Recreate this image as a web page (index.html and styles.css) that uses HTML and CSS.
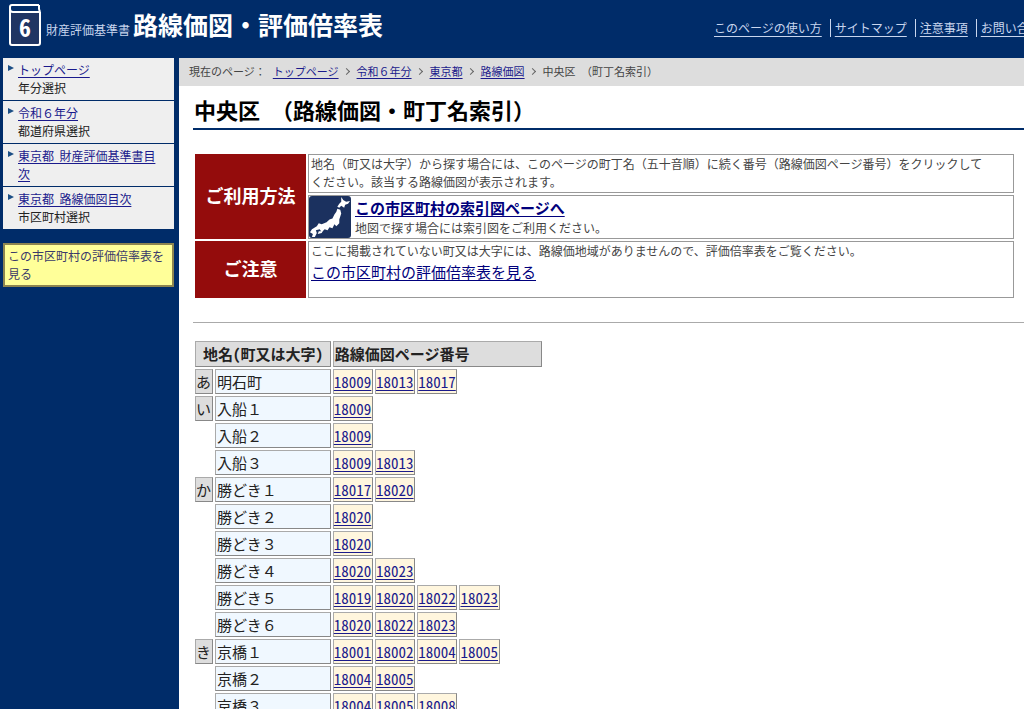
FILE: index.html
```html
<!DOCTYPE html>
<html lang="ja">
<head>
<meta charset="utf-8">
<title>中央区（路線価図・町丁名索引）</title>
<link rel="stylesheet" href="styles.css">
</head>
<body>
<header class="header">
  <div class="brand">
    <svg class="book" viewBox="0 0 34 44" width="34" height="44" role="img" aria-label="令和6年分">
      <rect x="2" y="10" width="30" height="32" fill="#203563"/>
      <path d="M31 2H4Q2 2 2 4V40Q2 42 4 42H30Q32 42 32 40V9H5Q2 9 2 6M31 2V6L32 9" fill="none" stroke="#fff" stroke-width="2" stroke-linejoin="round"/>
      <text class="book-number" x="17" y="34" text-anchor="middle">6</text>
    </svg>
    <span class="brand-sub">財産評価基準書</span>
    <span class="brand-title">路線価図・評価倍率表</span>
  </div>
  <nav class="header-nav">
    <a href="#">このページの使い方</a>
    <a href="#">サイトマップ</a>
    <a href="#">注意事項</a>
    <a href="#">お問い合わせ</a>
  </nav>
</header>
<div class="layout">
  <aside class="sidebar">
    <ul class="side-list">
      <li><a href="#">トップページ</a><br>年分選択</li>
      <li><a href="#">令和６年分</a><br>都道府県選択</li>
      <li><a href="#">東京都&nbsp; 財産評価基準書目次</a></li>
      <li><a href="#">東京都&nbsp; 路線価図目次</a><br>市区町村選択</li>
    </ul>
    <a class="side-button" href="#">この市区町村の評価倍率表を見る</a>
  </aside>
  <main class="main">
    <nav class="crumbs">
      <span>現在のページ：</span>
      <a href="#">トップページ</a><i class="sep"></i>
      <a href="#">令和６年分</a><i class="sep"></i>
      <a href="#">東京都</a><i class="sep"></i>
      <a href="#">路線価図</a><i class="sep"></i>
      <span>中央区　（町丁名索引）</span>
    </nav>
    <div class="content">
      <h1>中央区　（路線価図・町丁名索引）</h1>
      <table class="guide">
        <tr>
          <th rowspan="2" scope="rowgroup">ご利用方法</th>
          <td>地名（町又は大字）から探す場合には、このページの町丁名（五十音順）に続く番号（路線価図ページ番号）をクリックして<br>ください。該当する路線価図が表示されます。</td>
        </tr>
        <tr>
          <td class="map-cell">
            <div class="map-row">
              <svg class="map" viewBox="0 0 43 43" width="42" height="42" aria-hidden="true">
                <rect width="43" height="43" rx="3" fill="#1b315f"/>
                <path d="M33 1L35 4L38 6L42 5L40 8L37 9L36 12L33 10L31 12L29 11L31 8L33 6Z" fill="#fff"/>
                <path d="M29 13L32 14L33 18L32 21L31 24L31 28L28 31L26 29L24 33L21 32L19 35L16 34L13 37L11 34L7 35L8 38L6 42L3 42L4 39L1 37L3 34L8 31L10 28L13 29L18 27L21 24L24 23L26 19L28 16Z" fill="#fff"/>
                <path d="M10 36L14 36L13 38L9 39Z" fill="#fff"/>
              </svg>
              <div>
                <a class="guide-link strong" href="#">この市区町村の索引図ページへ</a>
                <p>地図で探す場合には索引図をご利用ください。</p>
              </div>
            </div>
          </td>
        </tr>
        <tr>
          <th scope="row">ご注意</th>
          <td class="note">
            <p>ここに掲載されていない町又は大字には、路線価地域がありませんので、評価倍率表をご覧ください。</p>
            <a class="guide-link" href="#">この市区町村の評価倍率表を見る</a>
          </td>
        </tr>
      </table>
      <hr>
      <table class="towns">
        <colgroup><col class="c-kana"><col class="c-name"><col class="c-num"><col class="c-num"><col class="c-num"><col class="c-num"><col class="c-num"></colgroup>
        <thead>
          <tr><th class="center" colspan="2">地名(町又は大字)</th><th colspan="5">路線価図ページ番号</th></tr>
        </thead>
        <tbody>
          <tr><th>あ</th><td class="name">明石町</td><td><a href="#">18009</a></td><td><a href="#">18013</a></td><td><a href="#">18017</a></td></tr>
          <tr><th>い</th><td class="name">入船１</td><td><a href="#">18009</a></td></tr>
          <tr><td class="blank"></td><td class="name">入船２</td><td><a href="#">18009</a></td></tr>
          <tr><td class="blank"></td><td class="name">入船３</td><td><a href="#">18009</a></td><td><a href="#">18013</a></td></tr>
          <tr><th>か</th><td class="name">勝どき１</td><td><a href="#">18017</a></td><td><a href="#">18020</a></td></tr>
          <tr><td class="blank"></td><td class="name">勝どき２</td><td><a href="#">18020</a></td></tr>
          <tr><td class="blank"></td><td class="name">勝どき３</td><td><a href="#">18020</a></td></tr>
          <tr><td class="blank"></td><td class="name">勝どき４</td><td><a href="#">18020</a></td><td><a href="#">18023</a></td></tr>
          <tr><td class="blank"></td><td class="name">勝どき５</td><td><a href="#">18019</a></td><td><a href="#">18020</a></td><td><a href="#">18022</a></td><td><a href="#">18023</a></td></tr>
          <tr><td class="blank"></td><td class="name">勝どき６</td><td><a href="#">18020</a></td><td><a href="#">18022</a></td><td><a href="#">18023</a></td></tr>
          <tr><th>き</th><td class="name">京橋１</td><td><a href="#">18001</a></td><td><a href="#">18002</a></td><td><a href="#">18004</a></td><td><a href="#">18005</a></td></tr>
          <tr><td class="blank"></td><td class="name">京橋２</td><td><a href="#">18004</a></td><td><a href="#">18005</a></td></tr>
          <tr><td class="blank"></td><td class="name">京橋３</td><td><a href="#">18004</a></td><td><a href="#">18005</a></td><td><a href="#">18008</a></td></tr>
        </tbody>
      </table>
    </div>
  </main>
</div>
</body>
</html>
```
FILE: styles.css
```css
* { box-sizing: border-box; }
html { height: 100%; }
body {
  margin: 0;
  height: 100%;
  display: flex;
  flex-direction: column;
  overflow: hidden;
  background: #002c69;
  color: #444;
  font-family: "Noto Sans CJK JP", sans-serif;
  font-size: 12px;
  line-height: 18px;
}
p { margin: 0; }
a { color: #1a1a8c; text-underline-offset: 2px; }

.header {
  flex: none;
  display: flex;
  justify-content: space-between;
  height: 58px;
  padding-left: 8px;
  color: #fff;
  white-space: nowrap;
}
.brand { display: flex; align-items: baseline; line-height: 48px; }
.book { align-self: flex-start; margin: 3px 4px 0 0; }
.book-number { fill: #fff; font: bold 24px "Noto Sans CJK JP", sans-serif; font-feature-settings: "hwid"; }
.brand-sub { color: #c9d6ee; }
.brand-title { margin-left: 3px; font-size: 25px; font-weight: bold; }
.header-nav {
  display: flex;
  align-items: flex-start;
  flex: 0 0 314px;
  overflow: hidden;
  padding-top: 19px;
}
.header-nav a { flex: none; padding: 0 8px 0 4px; color: #c9d6ee; text-underline-offset: 3px; }
.header-nav a + a { border-left: 1px solid #c9d6ee; }

.layout { flex: 1; min-height: 0; display: flex; }
.sidebar { flex: 0 0 179px; padding: 0 5px 0 3px; }
.side-list { margin: 0 0 13px; padding: 0; list-style: none; }
.side-list li {
  display: block;
  position: relative;
  padding: 3px 8px 3px 15px;
  border-bottom: 1px solid #002c69;
  background: #efefef;
  color: #222;
}
.side-list li::before {
  content: "";
  position: absolute;
  left: 5px;
  top: 7px;
  border: 3px solid transparent;
  border-left: 6px solid #1c4f86;
  border-right: 0;
}
.side-button {
  display: block;
  padding: 2px 3px;
  border: 2px solid #8d8550;
  background: #ff9;
  color: #3a3a6a;
  text-decoration: none;
}

.main { flex: 1; min-width: 0; background: #fff; }
.crumbs {
  display: flex;
  align-items: center;
  height: 28px;
  padding: 0 0 2px 10px;
  background: #ddd;
  font-size: 11px;
}
.crumbs span:first-child { margin-right: 7px; }
.sep {
  width: 5px;
  height: 5px;
  margin: 0 8px 0 5px;
  border: solid #666;
  border-width: 1px 1px 0 0;
  transform: rotate(45deg);
}
.content { padding-left: 14px; }
h1 {
  margin: 0 0 22px;
  padding: 7px 0 3px 1px;
  border-bottom: 2px solid #002c69;
  color: #000;
  font-size: 22px;
  line-height: 32px;
}

.guide { width: calc(100% - 8px); border-spacing: 2px; }
.guide th { width: 111px; padding: 0 0 4px; background: #940c0c; color: #fff; font-size: 18px; }
.guide td { padding: 0 2px 1px; border: 1px solid #999; vertical-align: top; }
.guide .map-cell { padding: 0; }
.map-row { display: flex; gap: 4px; }
.map { flex: none; }
.guide-link { font-size: 15px; line-height: 23px; color: #00007c; }
.guide-link.strong { font-weight: bold; }
.guide .note { padding-bottom: 14px; }
hr { margin: 22px 0 16px; border: 0; border-top: 1px solid #aaa; }

.towns { table-layout: fixed; width: 351px; border-spacing: 2px; font-size: 15px; line-height: 23px; color: #222; }
.c-kana { width: 18px; }
.c-name { width: 115px; }
.c-num { width: 40px; }
.towns th, .towns td {
  padding: 0 1px;
  border: 1px solid;
  border-color: #aaa #888 #888 #aaa;
  white-space: nowrap;
  text-align: left;
  font-feature-settings: "hwid";
}
.towns th { background: #ddd; }
.towns thead th { line-height: 24px; }
.towns tbody th { padding: 0; font-weight: normal; }
.towns thead .center { text-align: center; }
.towns td { padding: 0; background: #fff6de; }
.towns .name { padding: 0 1px; background: #f0f8ff; font-feature-settings: normal; }
.towns .blank { border: 0; background: none; }
```
